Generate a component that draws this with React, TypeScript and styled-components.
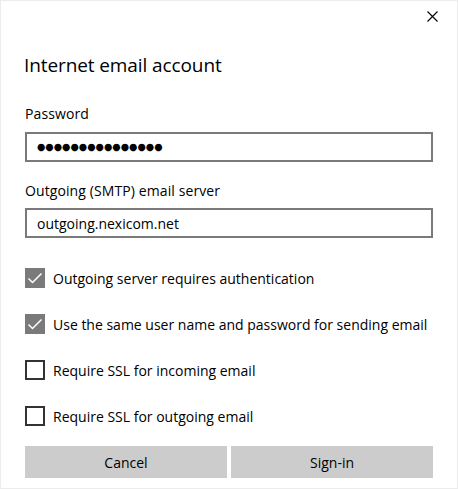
import React from "react";
import styled, { createGlobalStyle } from "styled-components";

const Global = createGlobalStyle`
  html, body { margin: 0; padding: 0; background: #fff; }
  * { box-sizing: border-box; }
`;

const Dialog = styled.div`
  width: 458px;
  height: 489px;
  border: 1px solid #ececec;
  background: #fff;
  font-family: "Open Sans", "Noto Sans", sans-serif;
  color: #000;
  padding: 0 24px;
  display: flex;
  flex-direction: column;
`;

const TopBar = styled.div`
  height: 34px;
  display: flex;
  justify-content: flex-end;
  align-items: flex-end;
  margin-right: -6px;
`;

const CloseBtn = styled.button`
  border: none;
  background: none;
  padding: 0;
  width: 14px;
  height: 14px;
  display: flex;
  align-items: center;
  justify-content: center;
  margin-bottom: 12px;
`;

const Title = styled.h1`
  margin: 17px 0 0 -1px;
  font-size: 19px;
  font-weight: 400;
  line-height: 26px;
  letter-spacing: -0.1px;
`;

const Label = styled.div<{ $top: number }>`
  margin-top: ${(p) => p.$top}px;
  font-size: 14px;
  line-height: 20px;
  letter-spacing: 0.1px;
`;

const Input = styled.div<{ $top: number }>`
  margin-top: ${(p) => p.$top}px;
  height: 30px;
  border: 2px solid #7a7a7a;
  display: flex;
  align-items: center;
  padding-left: 10px;
  font-size: 14px;
`;

const Dots = styled.span`
  font-size: 9.6px;
  line-height: 1;
  font-family: "DejaVu Sans", sans-serif;
`;

const Checks = styled.div`
  margin-top: 30px;
  display: flex;
  flex-direction: column;
  gap: 26px;
`;

const CheckRow = styled.label`
  display: flex;
  align-items: center;
  gap: 8px;
  height: 20px;
  font-size: 14px;
`;

const Box = styled.span<{ $checked: boolean }>`
  width: 20px;
  height: 20px;
  flex: none;
  display: flex;
  align-items: center;
  justify-content: center;
  background: ${(p) => (p.$checked ? "#7a7a7a" : "#fff")};
  border: 2px solid ${(p) => (p.$checked ? "#7a7a7a" : "#333")};
`;

const Buttons = styled.div`
  margin-top: 20px;
  display: grid;
  grid-template-columns: 1fr 1fr;
  gap: 4px;
`;

const Btn = styled.button`
  height: 32px;
  border: none;
  background: #cccccc;
  font-family: "Open Sans", "Noto Sans", sans-serif;
  font-size: 14px;
  color: #000;
`;

const Check = ({ checked, label }: { checked: boolean; label: string }) => (
  <CheckRow>
    <Box $checked={checked}>
      {checked && (
        <svg width="16" height="12" viewBox="0 0 16 12">
          <path d="M1.5 6.5 L5.5 10.5 L14.5 1.5" stroke="#fff" strokeWidth="1.5" fill="none" />
        </svg>
      )}
    </Box>
    {label}
  </CheckRow>
);

export default function App() {
  return (
    <>
      <Global />
      <Dialog>
        <TopBar>
          <CloseBtn aria-label="Close">
            <svg width="11" height="11" viewBox="0 0 11 11">
              <path d="M0.5 0.5 L10.5 10.5 M10.5 0.5 L0.5 10.5" stroke="#000" strokeWidth="1.1" />
            </svg>
          </CloseBtn>
        </TopBar>
        <Title>Internet email account</Title>
        <Label $top={26}>Password</Label>
        <Input $top={8}>
          <Dots>●●●●●●●●●●●●●●●</Dots>
        </Input>
        <Label $top={19}>Outgoing (SMTP) email server</Label>
        <Input $top={7}>outgoing.nexicom.net</Input>
        <Checks>
          <Check checked label="Outgoing server requires authentication" />
          <Check checked label="Use the same user name and password for sending email" />
          <Check checked={false} label="Require SSL for incoming email" />
          <Check checked={false} label="Require SSL for outgoing email" />
        </Checks>
        <Buttons>
          <Btn>Cancel</Btn>
          <Btn>Sign-in</Btn>
        </Buttons>
      </Dialog>
    </>
  );
}
